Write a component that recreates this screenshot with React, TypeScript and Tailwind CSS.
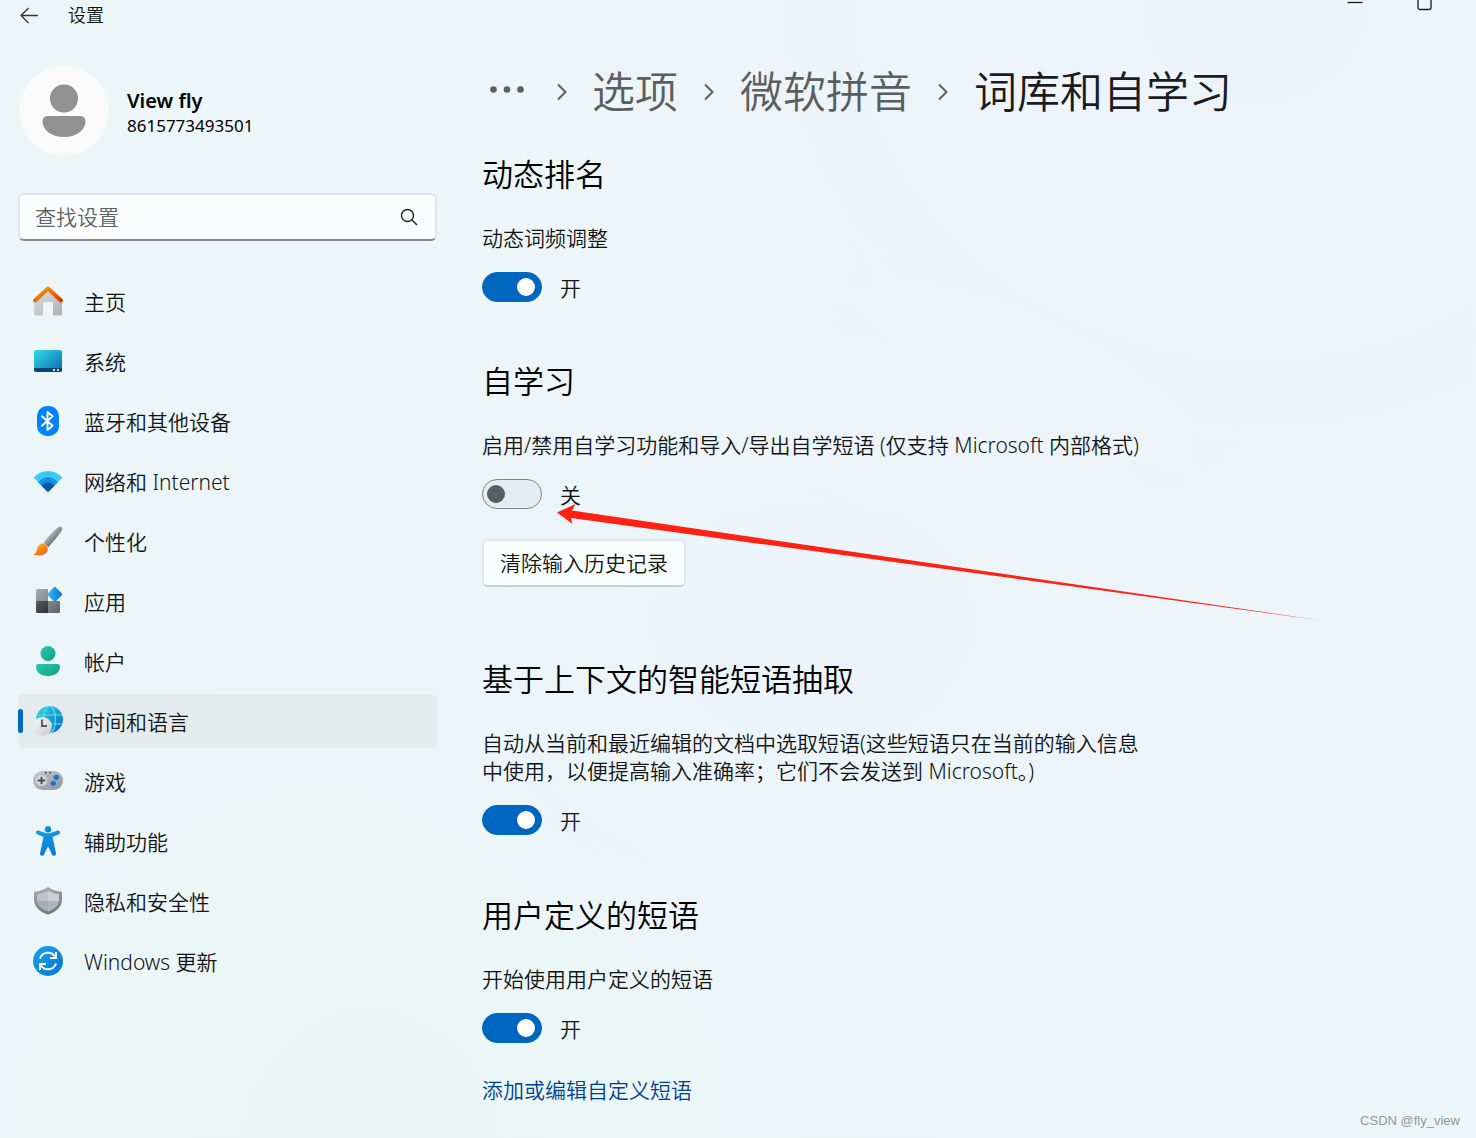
import { useState, type ReactNode } from 'react';

function HomeIcon() {
  return (
    <svg viewBox="0 0 30 30" className="size-[30px]" aria-hidden="true">
      <defs>
        <linearGradient id="home-wall" x1="0" y1="0" x2="1" y2="1">
          <stop offset="0" stopColor="#e3e3e4" />
          <stop offset="1" stopColor="#adadaf" />
        </linearGradient>
        <linearGradient id="home-roof" x1="0" y1="0" x2="1" y2="1">
          <stop offset="0" stopColor="#fba013" />
          <stop offset="1" stopColor="#d43c05" />
        </linearGradient>
      </defs>
      <path d="M1 14 15 2l14 12v14a1.500 1.500 0 0 1-1.500 1.500h-6.500a1 1 0 0 1-1-1V17a1 1 0 0 0-1-1h-8a1 1 0 0 0-1 1v11.500a1 1 0 0 1-1 1H2.500A1.500 1.500 0 0 1 1 28z" fill="url(#home-wall)" />
      <path d="M2 14.400 15 2.500l13 11.900" fill="none" stroke="url(#home-roof)" strokeWidth="4" strokeLinecap="round" strokeLinejoin="round" />
    </svg>
  );
}

function SystemIcon() {
  return (
    <svg viewBox="0 0 30 30" className="size-[30px]" aria-hidden="true">
      <defs>
        <linearGradient id="sys" x1="0" y1="0" x2="1" y2="1">
          <stop offset="0" stopColor="#34dbe4" />
          <stop offset="1" stopColor="#0869b8" />
        </linearGradient>
      </defs>
      <rect x="1" y="4" width="28" height="22" rx="2" fill="url(#sys)" />
      <path d="M1 22h28v2a2 2 0 0 1-2 2H3a2 2 0 0 1-2-2z" fill="#0b4870" />
      <path d="M20 23h2v2h-2zM24 23h2v2h-2z" fill="#b9dced" />
    </svg>
  );
}

function BluetoothIcon() {
  return (
    <svg viewBox="0 0 30 30" className="size-[30px]" aria-hidden="true">
      <rect x="4" y="0" width="22" height="30" rx="10" fill="#0082fc" />
      <path d="m9 10.200 10.600 9.600L14.500 24V6l5.100 4.200L9 19.800" fill="none" stroke="#fff" strokeWidth="1.900" strokeLinejoin="round" strokeLinecap="round" />
    </svg>
  );
}

function NetworkIcon() {
  return (
    <svg viewBox="0 0 30 30" className="size-[30px]" aria-hidden="true">
      <path d="M1.200 12.300a1 1 0 0 1 0-1.400C5 7.200 9.800 5 15 5s10 2.200 13.800 5.900a1 1 0 0 1 0 1.400L15.700 25.600a1 1 0 0 1-1.400 0z" fill="#3bcbf7" />
      <path d="M5.200 16.200C8 13.300 11.300 11 15 11s7 2.300 9.800 5.200l-9.100 9.400a1 1 0 0 1-1.400 0z" fill="#1590df" />
      <path d="M8.900 20C10.500 17.800 12.600 16.500 15 16.500s4.500 1.300 6.100 3.500l-5.400 5.600a1 1 0 0 1-1.400 0z" fill="#0d57a1" />
    </svg>
  );
}

function BrushIcon() {
  return (
    <svg viewBox="0 0 30 30" className="size-[30px]" aria-hidden="true">
      <defs>
        <linearGradient id="brush-handle" x1="0.300" y1="0.300" x2="0.700" y2="0.700">
          <stop offset="0" stopColor="#bfc3c9" />
          <stop offset="1" stopColor="#5f656d" />
        </linearGradient>
        <linearGradient id="brush-tip" x1="0.200" y1="0" x2="0.800" y2="1">
          <stop offset="0" stopColor="#ffb82b" />
          <stop offset="1" stopColor="#ee5a12" />
        </linearGradient>
      </defs>
      <path d="M10.500 17C14 12 20.500 4.800 25 1.200c2.800-2 5.400.4 3.700 3.300-3 4.800-9.200 12-13.200 16.700z" fill="url(#brush-handle)" />
      <path d="M1 28.200c2.600-1.500 2.600-3.600 3.300-6.200 1.200-4 5-5.800 8.200-3.600 3 2.100 3 6.400.3 8.800-3.200 2.800-8 2.400-11.500 1.700-.6-.1-.8-.5-.3-.7z" fill="url(#brush-tip)" />
    </svg>
  );
}

function AppsIcon() {
  return (
    <svg viewBox="0 0 30 30" className="size-[30px]" aria-hidden="true">
      <defs>
        <linearGradient id="app-a" x1="0" y1="0" x2="1" y2="1">
          <stop offset="0" stopColor="#a3a9b2" />
          <stop offset="1" stopColor="#868c95" />
        </linearGradient>
        <linearGradient id="app-b" x1="0" y1="0" x2="1" y2="1">
          <stop offset="0" stopColor="#585b5f" />
          <stop offset="1" stopColor="#303235" />
        </linearGradient>
        <linearGradient id="app-c" x1="0" y1="0" x2="1" y2="1">
          <stop offset="0" stopColor="#84898f" />
          <stop offset="1" stopColor="#5d6269" />
        </linearGradient>
        <linearGradient id="app-d" x1="0" y1="0.500" x2="1" y2="0.500">
          <stop offset="0" stopColor="#35bdf3" />
          <stop offset="1" stopColor="#0873d6" />
        </linearGradient>
      </defs>
      <path d="M3 4.500A1.500 1.500 0 0 1 4.500 3H15v12H3z" fill="url(#app-a)" />
      <path d="M3 15h12v12H4.500A1.500 1.500 0 0 1 3 25.500z" fill="url(#app-b)" />
      <path d="M15 15h12v10.500a1.500 1.500 0 0 1-1.500 1.500H15z" fill="url(#app-c)" />
      <path d="M21 1.300a1.200 1.200 0 0 1 1.700 0l6.100 6.300a1.200 1.200 0 0 1 0 1.700l-6.100 6.200a1.200 1.200 0 0 1-1.700 0l-6.200-6.200a1.200 1.200 0 0 1 0-1.700z" fill="url(#app-d)" />
    </svg>
  );
}

function AccountIcon() {
  return (
    <svg viewBox="0 0 30 30" className="size-[30px]" aria-hidden="true">
      <defs>
        <linearGradient id="acc" x1="0" y1="0" x2="1" y2="1">
          <stop offset="0" stopColor="#27cdb0" />
          <stop offset="1" stopColor="#139c86" />
        </linearGradient>
      </defs>
      <circle cx="15" cy="7.500" r="7.500" fill="url(#acc)" />
      <path d="M5.500 18h19a2.500 2.500 0 0 1 2.500 2.500c0 6-5 9.500-12 9.500S3 26.500 3 20.500A2.500 2.500 0 0 1 5.500 18z" fill="url(#acc)" />
    </svg>
  );
}

function TimeIcon() {
  return (
    <svg viewBox="0 0 30 30" className="size-[30px]" aria-hidden="true">
      <defs>
        <linearGradient id="globe" x1="0.100" y1="0.100" x2="0.900" y2="0.900">
          <stop offset="0" stopColor="#2cd3da" />
          <stop offset="1" stopColor="#0a6fc9" />
        </linearGradient>
        <linearGradient id="clock" x1="0" y1="0" x2="1" y2="1">
          <stop offset="0" stopColor="#fafafa" />
          <stop offset="1" stopColor="#c9cacc" />
        </linearGradient>
      </defs>
      <circle cx="16.500" cy="13.500" r="13.500" fill="url(#globe)" />
      <g fill="none" stroke="#63dff0" strokeWidth="1.200">
        <ellipse cx="16.500" cy="13.500" rx="6" ry="13.500" />
        <path d="M4 9h25M4 18h25" />
      </g>
      <circle cx="9.500" cy="20.500" r="9.500" fill="url(#clock)" />
      <path d="M9 13.500V20h5" fill="none" stroke="#55585c" strokeWidth="1.900" />
    </svg>
  );
}

function GameIcon() {
  return (
    <svg viewBox="0 0 30 30" className="size-[30px]" aria-hidden="true">
      <defs>
        <linearGradient id="pad" x1="0" y1="0" x2="1" y2="1">
          <stop offset="0" stopColor="#c6cad0" />
          <stop offset="1" stopColor="#8d9299" />
        </linearGradient>
      </defs>
      <rect x="0" y="5" width="30" height="19" rx="9.500" fill="url(#pad)" />
      <circle cx="8.500" cy="14.500" r="5.500" fill="#d5d8dc" />
      <path d="M8.500 10.700v7.600M4.700 14.500h7.600" stroke="#45484c" strokeWidth="1.800" />
      <circle cx="23.300" cy="11.300" r="2.600" fill="#0c78d8" />
      <circle cx="20.300" cy="17.300" r="2.600" fill="#0c78d8" />
      <circle cx="12.800" cy="6.700" r="0.900" fill="#45484c" />
      <circle cx="17.200" cy="6.700" r="0.900" fill="#45484c" />
    </svg>
  );
}

function AccessibilityIcon() {
  return (
    <svg viewBox="0 0 30 30" className="size-[30px]" aria-hidden="true">
      <defs>
        <linearGradient id="person" x1="0" y1="0" x2="0.600" y2="1">
          <stop offset="0" stopColor="#18a0ea" />
          <stop offset="1" stopColor="#0878d6" />
        </linearGradient>
      </defs>
      <g fill="url(#person)">
        <circle cx="15" cy="3.200" r="3.200" />
        <path d="M5.600 4.600c3.200 1.200 6.300 2.700 9.400 2.700s6.200-1.500 9.400-2.700c2.500-.7 3.700 2.500 1.400 3.600-1.900.9-4 1.500-5.500 2.400-.6.400-.7 1-.5 1.700l3.100 14.800c.5 2.800-3 3.700-4 1.300L15.700 21.500c-.3-.7-1.100-.7-1.400 0l-3.200 6.900c-1 2.400-4.500 1.500-4-1.300l3.100-14.800c.2-.7.100-1.300-.5-1.700-1.500-.9-3.600-1.500-5.500-2.400-2.300-1.100-1.100-4.300 1.400-3.600z" />
      </g>
    </svg>
  );
}

function ShieldIcon() {
  return (
    <svg viewBox="0 0 30 30" className="size-[30px]" aria-hidden="true">
      <defs>
        <linearGradient id="shield" x1="0" y1="0" x2="0.300" y2="1">
          <stop offset="0" stopColor="#a9adb1" />
          <stop offset="1" stopColor="#73787e" />
        </linearGradient>
      </defs>
      <path d="M15 1c4 3 8.500 4.300 13 4.500a1 1 0 0 1 1 1V13c0 7.500-5.200 12.500-13.300 15.300a2 2 0 0 1-1.400 0C6.200 25.500 1 20.500 1 13V6.500a1 1 0 0 1 1-1C6.500 5.300 11 4 15 1z" fill="url(#shield)" />
      <path d="M15 4v11H4V8.200C8 7.700 11.800 6.500 15 4z" fill="#bfc2c6" />
      <path d="M15 4v11h11V8.200C22 7.700 18.200 6.500 15 4z" fill="#cdd0d3" />
      <path d="M4 15h11v10.700C8.500 23.200 4.700 19.700 4 15z" fill="#a9adb2" />
      <path d="M26 15H15v10.700c6.500-2.500 10.300-6 11-10.700z" fill="#b2b6ba" />
    </svg>
  );
}

function UpdateIcon() {
  return (
    <svg viewBox="0 0 30 30" className="size-[30px]" aria-hidden="true">
      <defs>
        <linearGradient id="upd" x1="0" y1="0" x2="1" y2="1">
          <stop offset="0" stopColor="#1ba4ea" />
          <stop offset="1" stopColor="#0774d4" />
        </linearGradient>
      </defs>
      <circle cx="15" cy="15" r="15" fill="url(#upd)" />
      <g fill="none" stroke="#fff" strokeWidth="2">
        <path d="M7 12.500A8.400 8.400 0 0 1 22 10.500" />
        <path d="M23 17.500A8.400 8.400 0 0 1 8 19.500" />
        <path d="M23 6v6h-6M7 24v-6h6" />
      </g>
    </svg>
  );
}

const navItems: { label: string; icon: ReactNode }[] = [
  { label: '主页', icon: <HomeIcon /> },
  { label: '系统', icon: <SystemIcon /> },
  { label: '蓝牙和其他设备', icon: <BluetoothIcon /> },
  { label: '网络和 Internet', icon: <NetworkIcon /> },
  { label: '个性化', icon: <BrushIcon /> },
  { label: '应用', icon: <AppsIcon /> },
  { label: '帐户', icon: <AccountIcon /> },
  { label: '时间和语言', icon: <TimeIcon /> },
  { label: '游戏', icon: <GameIcon /> },
  { label: '辅助功能', icon: <AccessibilityIcon /> },
  { label: '隐私和安全性', icon: <ShieldIcon /> },
  { label: 'Windows 更新', icon: <UpdateIcon /> },
];

function Chevron() {
  return (
    <svg viewBox="0 0 12 18" className="h-[18px] w-3 shrink-0" aria-hidden="true">
      <path d="m2 1.500 7.500 7.500L2 16.500" fill="none" stroke="#5b5e60" strokeWidth="2" />
    </svg>
  );
}

type ToggleProps = { id: string; defaultOn: boolean; children: ReactNode };

function Toggle({ id, defaultOn, children }: ToggleProps) {
  const [on, setOn] = useState(defaultOn);

  return (
    <>
      <label htmlFor={id} className="mt-[30px] block">
        {children}
      </label>
      <div className="mt-5 flex h-[30px] items-center gap-[18px]">
        <input
          id={id}
          type="checkbox"
          role="switch"
          checked={on}
          onChange={(e) => setOn(e.target.checked)}
          className="flex h-[30px] w-[60px] appearance-none items-center rounded-full border border-[#7d8486] bg-[#e6edf2] px-1 before:size-[18px] before:rounded-full before:bg-[#5a5d5e] checked:justify-end checked:border-[#0067c0] checked:bg-[#0067c0] checked:px-[6px] checked:before:bg-white"
        />
        <span className="pt-[2px]">{on ? '开' : '关'}</span>
      </div>
    </>
  );
}

function Sidebar() {
  const [active, setActive] = useState('时间和语言');

  return (
    <aside className="w-[419px] shrink-0 pt-[34px]">
      <div className="flex items-center gap-[18px] pl-px">
        <svg viewBox="0 0 90 90" className="size-[90px]" aria-hidden="true">
          <circle cx="45" cy="45" r="45" fill="#fafafa" />
          <circle cx="45" cy="32.500" r="14" fill="#919191" />
          <path d="M28.500 50h33a5 5 0 0 1 5 5.500C66 65 57 71 45 71s-21-6-21.500-15.500a5 5 0 0 1 5-5.500z" fill="#919191" />
        </svg>
        <div className="pt-1 text-black">
          <p className="text-[20px] font-semibold leading-[26px]">View fly</p>
          <p className="text-[17px] font-normal leading-6">8615773493501</p>
        </div>
      </div>

      <div className="mt-[37px] flex h-12 items-center rounded-md border-2 border-[#dfe6e8] border-b-[#848a8b] bg-[#fbfcfe] pl-[15px] pr-[17px]">
        <input
          type="search"
          aria-label="查找设置"
          placeholder="查找设置"
          className="min-w-0 flex-1 bg-transparent leading-7 outline-none placeholder:text-[#606364]"
        />
        <button aria-label="搜索">
          <svg viewBox="0 0 18 18" className="size-[18px]" fill="none" stroke="#202425" strokeWidth="1.400" aria-hidden="true">
            <circle cx="7.500" cy="7.500" r="6" />
            <path d="m12 12 5 5" />
          </svg>
        </button>
      </div>

      <nav className="mt-[33px] flex flex-col gap-[6px]">
        {navItems.map((item) => {
          const current = item.label === active;
          return (
            <button
              key={item.label}
              onClick={() => setActive(item.label)}
              aria-current={current ? 'page' : undefined}
              className={
                current
                  ? 'relative flex h-[54px] items-center gap-[21px] rounded-md bg-[#e4ebec] pl-[15px] text-left before:absolute before:left-0 before:h-6 before:w-[5px] before:rounded-full before:bg-[#0067c0]'
                  : 'relative flex h-[54px] items-center gap-[21px] rounded-md pl-[15px] text-left hover:bg-[#e4ebec]'
              }
            >
              {item.icon}
              <span className="pt-[2px]">{item.label}</span>
            </button>
          );
        })}
      </nav>
    </aside>
  );
}

function Breadcrumb() {
  return (
    <nav aria-label="导航路径" className="flex h-16 items-center text-[43px] leading-[60px] text-[#5b5e60]">
      <button aria-label="更多" className="mb-1 ml-2">
        <svg viewBox="0 0 34 8" className="h-2 w-[34px]" fill="#5b5e60" aria-hidden="true">
          <circle cx="3.500" cy="3.500" r="3.300" />
          <circle cx="17" cy="3.500" r="3.300" />
          <circle cx="30.500" cy="3.500" r="3.300" />
        </svg>
      </button>
      <span className="ml-8 mr-6 flex"><Chevron /></span>
      <a href="#options">选项</a>
      <span className="mx-[25px] flex"><Chevron /></span>
      <a href="#pinyin">微软拼音</a>
      <span className="mx-[25px] flex"><Chevron /></span>
      <h1 className="text-[#1a1c1d]">词库和自学习</h1>
    </nav>
  );
}

export default function App() {
  return (
    <div className="relative min-h-screen overflow-hidden bg-[#ecf5f8] bg-[radial-gradient(ellipse_at_85%_0%,#eef3fb_0%,transparent_40%),radial-gradient(ellipse_at_55%_55%,#ecf4fb_0%,transparent_45%),radial-gradient(ellipse_at_25%_100%,#eaf6f6_0%,transparent_50%)] pb-6 font-['Noto_Sans','Noto_Sans_CJK_SC',sans-serif] text-[21px] font-[350] leading-7 text-[#111314]">
      <header className="flex h-[30px] items-center pl-5 pr-11">
        <button aria-label="返回">
          <svg viewBox="0 0 18 18" className="size-[18px]" fill="none" stroke="#303435" strokeWidth="1.300" aria-hidden="true">
            <path d="M18 9.500H1M8.500 2 1 9.500 8.500 17" />
          </svg>
        </button>
        <span className="ml-[30px] text-[18px]">设置</span>
        <div className="ml-auto flex gap-[53px] self-start">
          <button aria-label="最小化">
            <svg viewBox="0 0 16 11" className="block h-[11px] w-4" aria-hidden="true">
              <path d="M0.500 2.500h15" stroke="#1a1c1d" strokeWidth="1.300" />
            </svg>
          </button>
          <button aria-label="最大化">
            <svg viewBox="0 0 16 11" className="block h-[11px] w-4" aria-hidden="true">
              <rect x="2" y="-4" width="13" height="13.500" rx="2" fill="none" stroke="#1a1c1d" strokeWidth="1.300" />
            </svg>
          </button>
        </div>
      </header>

      <div className="flex pl-[18px] pt-[2px]">
        <Sidebar />
        <main className="min-w-0 flex-1 pl-[45px] pt-7">
          <Breadcrumb />

          <section className="mt-[30px]">
            <h2 className="text-[31px] leading-10 text-black">动态排名</h2>
            <Toggle id="ranking" defaultOn>动态词频调整</Toggle>
          </section>

          <section className="relative mt-[59px]">
            <h2 className="text-[31px] leading-10 text-black">自学习</h2>
            <Toggle id="learning" defaultOn={false}>
              启用/禁用自学习功能和导入/导出自学短语 (仅支持 Microsoft 内部格式)
            </Toggle>
            <button className="mt-[30px] flex h-12 items-center rounded-md border-2 border-[#dfe6e9] border-b-[#c8cfd2] bg-[#f9fcfd] px-4">
              清除输入历史记录
            </button>
            <svg viewBox="0 0 765 117" className="pointer-events-none absolute left-[75px] top-[143px] h-[117px] w-[765px]" aria-hidden="true">
              <path d="M0 8.500 18.500 0l-3.500 6.500L764 116.500 14 14l1.500 6z" fill="#ff2112" />
            </svg>
          </section>

          <section className="mt-[72px]">
            <h2 className="text-[31px] leading-10 text-black">基于上下文的智能短语抽取</h2>
            <Toggle id="context" defaultOn>
              自动从当前和最近编辑的文档中选取短语(这些短语只在当前的输入信息
              <br />
              中使用，以便提高输入准确率；它们不会发送到 Microsoft。)
            </Toggle>
          </section>

          <section className="mt-[60px]">
            <h2 className="text-[31px] leading-10 text-black">用户定义的短语</h2>
            <Toggle id="phrases" defaultOn>开始使用用户定义的短语</Toggle>
            <a href="#phrases" className="mt-[33px] block text-[#003e92]">
              添加或编辑自定义短语
            </a>
          </section>
        </main>
      </div>

      <p className="absolute bottom-2 right-4 font-['Liberation_Sans',sans-serif] text-[13px] leading-[18px] text-[#929798]">
        CSDN @fly_view
      </p>
    </div>
  );
}
